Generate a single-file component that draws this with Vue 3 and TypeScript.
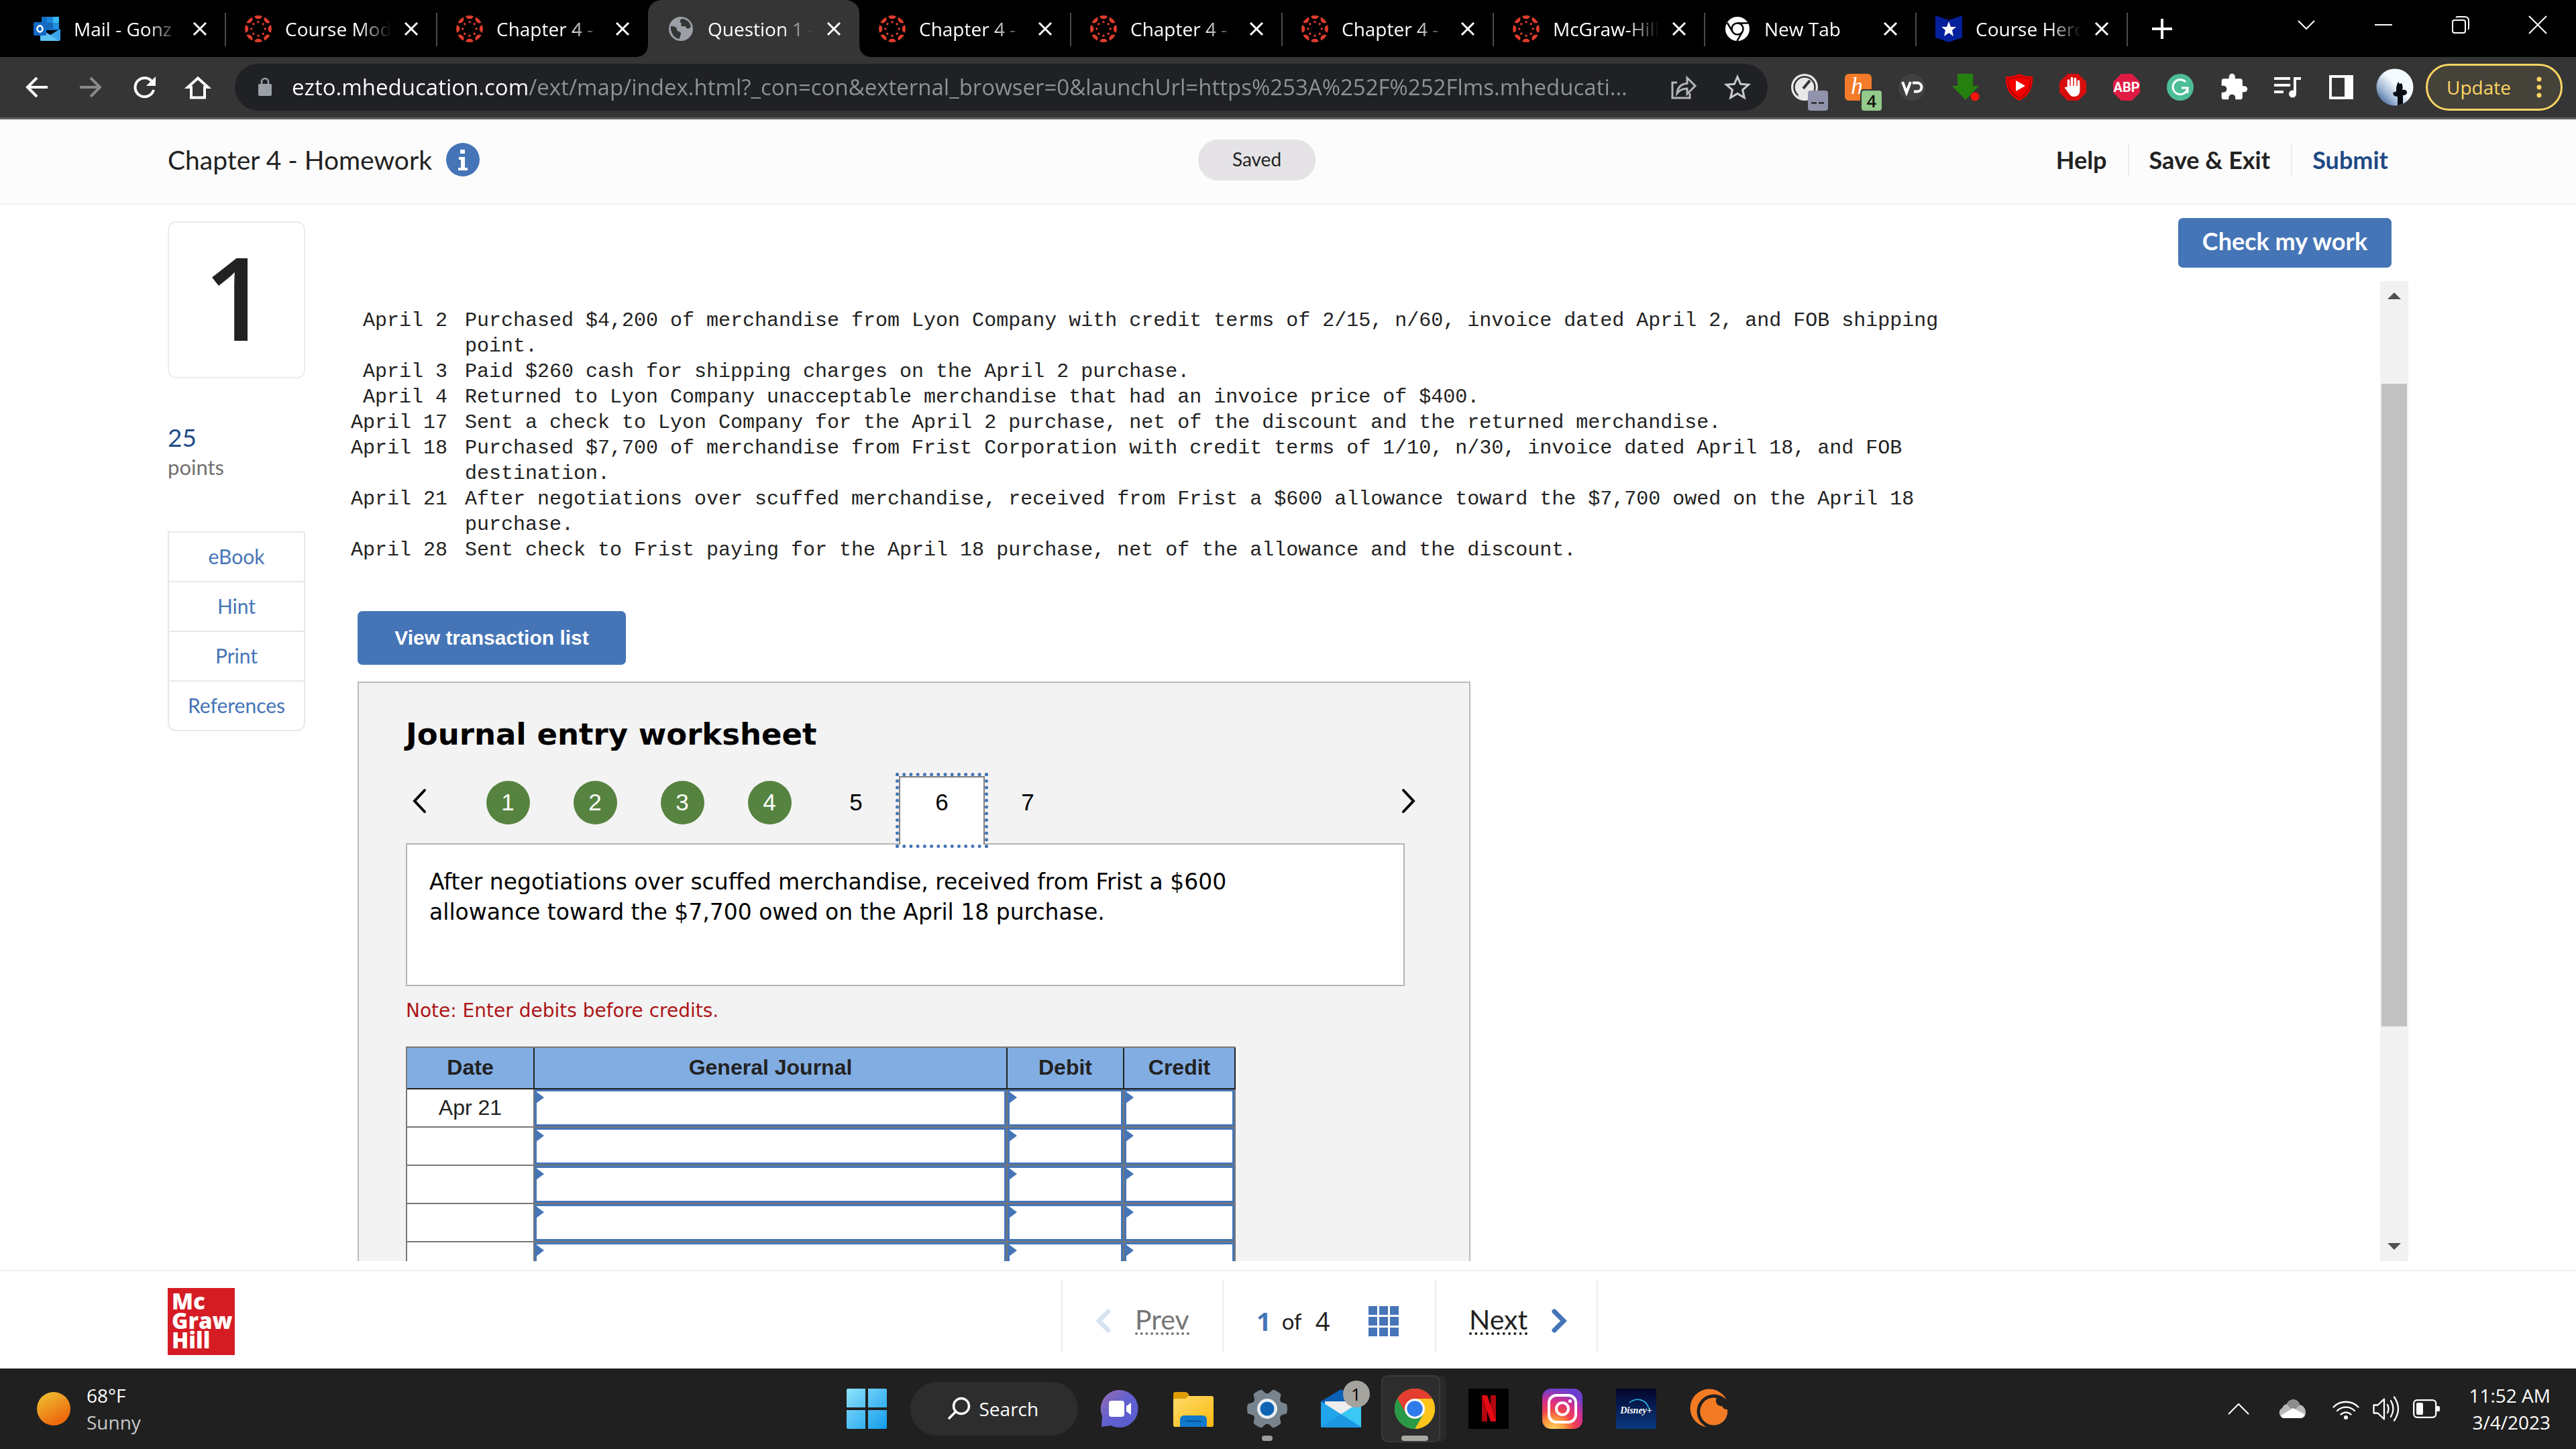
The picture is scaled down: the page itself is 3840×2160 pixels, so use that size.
<script setup lang="ts">
import { ref } from 'vue'

interface Tab {
  icon: string
  title: string
  active?: boolean
}

interface Transaction {
  date: string
  text: string
}

const spokes = [0, 45, 90, 135, 180, 225, 270, 315]

const canvasIcon =
  '<svg viewBox="-20 -20 40 40" width="40" height="40" fill="#e03c2d">' +
  spokes
    .map(
      (a) =>
        `<g transform="rotate(${a})"><path d="M-5.800-19.100A20 20 0 0 1 5.800-19.100A6 6 0 0 1-5.800-19.100z"/><circle cy="-10.200" r="1.700"/></g>`
    )
    .join('') +
  '</svg>'

const icons: Record<string, string> = {
  outlook:
    '<svg viewBox="0 0 40 40" width="40" height="40"><path d="M12 2h26v20H12z" fill="#0f6fc6"/><path d="M20 2h9v9h-9z" fill="#1a86d9"/><path d="M29 2h9v9h-9z" fill="#35b8f1"/><path d="M20 11h9v9h-9z" fill="#1468b8"/><path d="M29 11h9v9h-9z" fill="#1f8fe0"/><path d="M10 20l15 9 15-9v16a2 2 0 0 1-2 2H12a2 2 0 0 1-2-2z" fill="#3ba3ea"/><path d="M10 20l28 18H12a2 2 0 0 1-2-2z" fill="#5cc2f5"/><rect x="0" y="10" width="19" height="20" rx="2" fill="#1469c7"/><ellipse cx="9.500" cy="20" rx="4" ry="4.600" fill="none" stroke="#fff" stroke-width="2.600"/></svg>',
  canvas: canvasIcon,
  globe:
    '<svg viewBox="0 0 40 40" width="40" height="40"><circle cx="20" cy="20" r="18" fill="#9aa0a6"/><path d="M5 16c5 0 9 1 9 5s6 2 6 6-2 3-2 8c-8-1-14-9-13-19zM22 5c8 1 12 6 13 12-4 5-7 2-8 0s-4 0-6-1 1-4-1-5-2-5 2-6z" fill="#353535"/></svg>',
  chromeMono:
    '<svg viewBox="0 0 40 40" width="40" height="40"><circle cx="20" cy="20" r="18" fill="#fff"/><circle cx="20" cy="20" r="8.500" fill="none" stroke="#000" stroke-width="2.500"/><path d="M20 11.500h16M12.600 24.200L4.800 11M27.400 24.200L19.500 38" stroke="#000" stroke-width="2.500"/></svg>',
  courseHero:
    '<svg viewBox="0 0 40 40" width="40" height="40"><path d="M0 0l20 7 20-7v33l-20 7-20-7z" fill="#04209a"/><path d="M20 9l3 8h8l-6 5 2 9-7-5-7 5 2-9-6-5h8z" fill="#fff"/></svg>',
  back: '<svg viewBox="0 0 40 40" width="40" height="40" fill="none" stroke="#fff" stroke-width="4"><path d="M36 20H6M20 6L6 20l14 14"/></svg>',
  forward:
    '<svg viewBox="0 0 40 40" width="40" height="40" fill="none" stroke="#8a8a8a" stroke-width="4"><path d="M4 20h30M20 6l14 14-14 14"/></svg>',
  reload:
    '<svg viewBox="0 0 40 40" width="40" height="40"><path d="M32.500 13A14 14 0 1 0 34 24" fill="none" stroke="#fff" stroke-width="4"/><path d="M37 4v14H23z" fill="#fff"/></svg>',
  home: '<svg viewBox="0 0 40 40" width="40" height="40"><path d="M20 6.500L5 20h5v15.500h20V20h5z" fill="none" stroke="#fff" stroke-width="4"/></svg>',
  share:
    '<svg viewBox="0 0 40 40" width="40" height="40" fill="none" stroke="#b4b6b8" stroke-width="3"><path d="M10 13H3v23h26v-7"/><path d="M10 29c1-10 7-14 15-14.500V6l12 12-12 12v-8c-7 0-11 2-15 7z"/></svg>',
  star: '<svg viewBox="0 0 40 40" width="40" height="40"><path d="M20 4.500l4.700 10.800 11.800 1-8.900 7.800 2.700 11.500L20 29.500 9.700 35.600l2.700-11.500-8.900-7.800 11.800-1z" fill="none" stroke="#c8cacc" stroke-width="3"/></svg>',
  gauge:
    '<svg viewBox="0 0 60 60" width="60" height="60"><circle cx="30" cy="30" r="20" fill="#e8e8e6"/><circle cx="30" cy="30" r="15.500" fill="none" stroke="#333" stroke-width="2.500"/><path d="M38 20L28 32" stroke="#333" stroke-width="4"/><path d="M20 42a14 14 0 0 1 20 0l-4 6H24z" fill="#e8e8e6"/><rect x="35" y="35" width="30" height="30" rx="4" fill="#9193ad"/><path d="M40 53.500h8M51 53.500h8" stroke="#111" stroke-width="2"/></svg>',
  honey:
    '<svg viewBox="0 0 60 60" width="60" height="60"><rect x="10" y="10" width="40" height="40" rx="6" fill="#f47b29"/><text x="19" y="40" font-family="Liberation Serif, serif" font-style="italic" font-size="36" fill="#fff">h</text><rect x="33" y="33" width="34" height="34" rx="5" fill="#353535"/><rect x="35" y="35" width="30" height="30" rx="4" fill="#93ca8a"/><text x="50" y="60" text-anchor="middle" font-family="Open Sans, sans-serif" font-size="25" font-weight="600" fill="#111">4</text></svg>',
  vd: '<svg viewBox="0 0 60 60" width="60" height="60"><circle cx="30" cy="30" r="20" fill="#414141"/><path d="M16 22l6 16 6-16M31 23.500h7a6.500 6.500 0 0 1 0 13h-5" fill="none" stroke="#fff" stroke-width="4"/></svg>',
  download:
    '<svg viewBox="0 0 60 60" width="60" height="60"><path d="M18 10h23v18h9L30 49 10 28h8z" fill="#26800f"/><circle cx="44" cy="44" r="6.500" fill="#f5150c"/></svg>',
  shield:
    '<svg viewBox="0 0 60 60" width="60" height="60"><path d="M30 10c7 4 13 4 20 4 1 18-6 29-20 36C16 43 9 32 10 14c7 0 13 0 20-4z" fill="#f40000"/><path d="M30 14c6 3 11 3 17 3 0 15-5 23-17 29C18 40 13 32 13 17c6 0 11 0 17-3z" fill="none" stroke="#8b0000" stroke-width="1.200"/><path d="M25 20l14 8-14 8z" fill="#fff"/></svg>',
  hand: '<svg viewBox="0 0 60 60" width="60" height="60"><path d="M22 10h16l12 12v16L38 50H22L10 38V22z" fill="#d80d0d"/><path d="M23.500 33V20M28.500 30V16.500M33.500 30V17.500M38.500 33V21" stroke="#fff" stroke-width="3.600" stroke-linecap="round"/><path d="M21.700 28h18.600v8c0 5-4 8-8.500 8-4 0-6-2-8-5l-6-8c1-2 3-2 5 0z" fill="#fff"/></svg>',
  abp: '<svg viewBox="0 0 60 60" width="60" height="60"><path d="M22 10h16l12 12v16L38 50H22L10 38V22z" fill="#df1b43"/><text x="30" y="37" text-anchor="middle" font-family="Roboto, sans-serif" font-size="20" font-weight="700" fill="#fff">ABP</text></svg>',
  grammarly:
    '<svg viewBox="0 0 60 60" width="60" height="60"><circle cx="30" cy="30" r="20" fill="#4dbd98"/><path d="M38 22a11 11 0 1 0 3 9h-9M41 31v8" fill="none" stroke="#fff" stroke-width="3"/></svg>',
  puzzle:
    '<svg viewBox="0 0 24 24" width="44" height="44"><path d="M20.500 11H19V7a2 2 0 0 0-2-2h-4V3.500a2.500 2.500 0 0 0-5 0V5H4a2 2 0 0 0-2 2v3.800h1.500a2.700 2.700 0 0 1 0 5.400H2V20a2 2 0 0 0 2 2h3.800v-1.500a2.700 2.700 0 0 1 5.400 0V22H17a2 2 0 0 0 2-2v-4h1.500a2.500 2.500 0 0 0 0-5z" fill="#fff"/></svg>',
  playlist:
    '<svg viewBox="0 0 40 40" width="40" height="40"><path d="M0 7h24M0 17h24M0 27h14" stroke="#fff" stroke-width="4"/><path d="M31 31V7h9" fill="none" stroke="#fff" stroke-width="4"/><circle cx="27.500" cy="30" r="5.500" fill="#fff"/></svg>',
  sidePanel:
    '<svg viewBox="0 0 40 40" width="40" height="40"><path d="M2 2h36v36H2z" fill="#fff"/><path d="M6 6h19v28H6z" fill="#353535"/></svg>',
  avatar:
    '<svg viewBox="0 0 56 56" width="56" height="56"><defs><clipPath id="av"><circle cx="28" cy="28" r="27.500"/></clipPath><linearGradient id="avg" x1="1" y1="0" x2="0" y2="1"><stop offset=".45" stop-color="#f4fbff"/><stop offset=".7" stop-color="#9db4d4"/><stop offset="1" stop-color="#153a70"/></linearGradient></defs><g clip-path="url(#av)"><path d="M0 0h56v56H0z" fill="url(#avg)"/><path d="M32 56V42c-5 0-8-3-6-7 3 1 5-1 4-4 0-4 1-7 3-11l2 3 3-1c2 4 2 7 1 10 4-1 8 1 7 5-2 3-4 3-6 3v16z" fill="#0a0d14"/></g></svg>',
  windows:
    '<svg viewBox="0 0 60 60" width="60" height="60"><defs><linearGradient id="wg" x1="0" y1="0" x2="1" y2="1"><stop offset="0" stop-color="#8fe3fb"/><stop offset="1" stop-color="#119cec"/></linearGradient></defs><path d="M0 2a2 2 0 0 1 2-2h26v28H0zM32 0h26a2 2 0 0 1 2 2v26H32zM0 32h28v28H2a2 2 0 0 1-2-2zM32 32h28v26a2 2 0 0 1-2 2H32z" fill="url(#wg)"/></svg>',
  chat: '<svg viewBox="0 0 60 60" width="60" height="60"><defs><linearGradient id="cg" x1="0" y1="0" x2="1" y2="1"><stop offset="0" stop-color="#9b6db0"/><stop offset=".5" stop-color="#5f60cf"/><stop offset="1" stop-color="#5a5ad0"/></linearGradient></defs><path d="M30 2a28 28 0 1 1-13 53L3 57l1-16A28 28 0 0 1 30 2z" fill="url(#cg)"/><rect x="14" y="18" width="23" height="24" rx="4" fill="#fff"/><path d="M40 26l7-5v18l-7-5z" fill="#fff"/></svg>',
  folder:
    '<svg viewBox="0 0 60 60" width="60" height="60"><defs><linearGradient id="fg" x1="0" y1="0" x2="1" y2="1"><stop offset="0" stop-color="#ffdc6b"/><stop offset="1" stop-color="#fbb90f"/></linearGradient></defs><path d="M0 8a3 3 0 0 1 3-3h15c3 0 5 3 6 6l-6 8H0z" fill="#dd9b05"/><path d="M0 18c0-2 1-3 3-3h15l5-4h34a3 3 0 0 1 3 3v40a3 3 0 0 1-3 3H3a3 3 0 0 1-3-3z" fill="url(#fg)"/><path d="M10 57V46a6 6 0 0 1 6-6h28a6 6 0 0 1 6 6v11z" fill="#1079cb"/><path d="M18 48.500h24" stroke="#0b5394" stroke-width="2"/></svg>',
  settings:
    '<svg viewBox="-30 -30 60 60" width="60" height="60"><g fill="#77838d">' +
    [0, 60, 120, 180, 240, 300]
      .map((a) => `<path transform="rotate(${a + 30})" d="M-10-20L-7-29Q0-31 7-29L10-20z"/>`)
      .join('') +
    '<circle r="23"/></g><circle r="15" fill="#e9edf0"/><circle r="10.500" fill="#0e63b5"/></svg>',
  mail: '<svg viewBox="0 0 60 60" width="60" height="60"><path d="M0 19L30 1l30 18v20H0z" fill="#0b5fb5"/><path d="M6 19h48v22H6z" fill="#ededed"/><path d="M0 19l60 38a2 2 0 0 1-2 1H2a2 2 0 0 1-2-2z" fill="#22a4ea"/><path d="M60 19L30 38l30 20z" fill="#3cc8f4"/><path d="M30 38l30 19a2 2 0 0 1-2 1H2l-2-1z" fill="#1c97e4"/></svg>',
  chrome:
    '<svg viewBox="-30 -30 60 60" width="60" height="60"><circle r="30" fill="#fbbd09"/><path d="M0 0L-25.980-15A30 30 0 0 1 25.980-15H0z" fill="#e33e30"/><path d="M-25.980-15A30 30 0 0 0 0 30L13 7.500 0 0z" fill="#2a9a47"/><path d="M25.980-15A30 30 0 0 1 0 30L13 7.500 0-15z" fill="#fdc41c"/><path d="M-26-15L-13 7.500 0 0V-15z" fill="#e33e30"/><path d="M-25.980-15L-13 7.500 0 15 13 7.500 0 30A30 30 0 0 1-25.980-15z" fill="#2a9a47"/><circle r="15" fill="#fff"/><circle r="11.700" fill="#2f7bec"/></svg>',
  netflix:
    '<svg viewBox="0 0 60 60" width="60" height="60"><path d="M0 0h60v60H0z" fill="#000"/><path d="M20 10h8v39h-8zM33 10h8v39h-8z" fill="#b1060f"/><path d="M20 10h8l13 39h-8z" fill="#e50914"/></svg>',
  instagram:
    '<svg viewBox="0 0 60 60" width="60" height="60"><defs><radialGradient id="ig" cx=".28" cy="1.050" r="1.050"><stop offset="0" stop-color="#ffd96a"/><stop offset=".28" stop-color="#fa9a3c"/><stop offset=".5" stop-color="#f0434f"/><stop offset=".72" stop-color="#d92e8a"/><stop offset="1" stop-color="#6a3fd0"/></radialGradient></defs><rect width="60" height="60" rx="13" fill="url(#ig)"/><rect x="10" y="10" width="40" height="40" rx="11" fill="none" stroke="#fff" stroke-width="4"/><circle cx="30" cy="30" r="9" fill="none" stroke="#fff" stroke-width="4"/><circle cx="41.500" cy="18.500" r="2.600" fill="#fff"/></svg>',
  disney:
    '<svg viewBox="0 0 60 60" width="60" height="60"><defs><linearGradient id="dg" x1="0" y1="0" x2="0" y2="1"><stop offset="0" stop-color="#03052b"/><stop offset="1" stop-color="#0a3a80"/></linearGradient></defs><rect width="60" height="60" rx="2" fill="url(#dg)"/><path d="M20 21c10-8 25-6 29 9" fill="none" stroke="#2bb6e6" stroke-width="1.600"/><text x="30" y="37" text-anchor="middle" font-family="Liberation Serif, serif" font-style="italic" font-weight="700" font-size="14" fill="#fff">Disney+</text></svg>',
  crunchyroll:
    '<svg viewBox="0 0 60 60" width="60" height="60"><circle cx="29" cy="29" r="28.500" fill="#f47b23"/><circle cx="36" cy="34" r="25.500" fill="#202020"/><path d="M48 26a8 8 0 0 1-8-12A20.500 20.500 0 1 0 56 31a8 8 0 0 1-8-5z" fill="#f47b23"/></svg>',
  chevronUp:
    '<svg viewBox="0 0 32 18" width="32" height="18"><path d="M1 17L16 2l15 15" fill="none" stroke="#fff" stroke-width="2"/></svg>',
  cloud:
    '<svg viewBox="0 0 40 30" width="40" height="30"><path d="M8 29a8 8 0 0 1-3-15 9 9 0 0 1 7-6C15-1 29-1 31 9c6 1 9 6 9 12s-4 8-8 8z" fill="#b9b9b9"/><path d="M12 8c3-9 17-9 19 2l-10 8z" fill="#8c8c8c"/><path d="M3 25l18-11 17 9c0 4-3 6-6 6H8c-3 0-4-1-5-4z" fill="#fff"/></svg>',
  wifi: '<svg viewBox="0 0 40 32" width="40" height="32" fill="none" stroke="#fff" stroke-width="2.400" stroke-linecap="round"><path d="M1.500 13.500a26 26 0 0 1 37 0M7 19a18.500 18.500 0 0 1 26 0M12.500 24.500a10.500 10.500 0 0 1 15 0"/><circle cx="20" cy="29" r="1.800" fill="#fff"/></svg>',
  speaker:
    '<svg viewBox="0 0 40 40" width="40" height="40" fill="none" stroke="#fff" stroke-width="2.300" stroke-linejoin="round" stroke-linecap="round"><path d="M1.500 14.500h6l9.500-9v30l-9.500-9h-6zM22 14q3 6 0 12M27 8q7 12 0 24M32 2.500q12 17.500 0 35"/></svg>',
  battery:
    '<svg viewBox="0 0 40 28" width="40" height="28"><rect x="1.200" y="1.200" width="33" height="25.600" rx="5" fill="none" stroke="#fff" stroke-width="2.300"/><path d="M35 10h3a2 2 0 0 1 2 2v4a2 2 0 0 1-2 2h-3z" fill="#fff"/><rect x="5" y="5" width="10" height="18" rx="2" fill="#fff"/></svg>',
}

const tabs: Tab[] = [
  { icon: 'outlook', title: 'Mail - Gonz' },
  { icon: 'canvas', title: 'Course Mod' },
  { icon: 'canvas', title: 'Chapter 4 -' },
  { icon: 'globe', title: 'Question 1 -', active: true },
  { icon: 'canvas', title: 'Chapter 4 -' },
  { icon: 'canvas', title: 'Chapter 4 -' },
  { icon: 'canvas', title: 'Chapter 4 -' },
  { icon: 'canvas', title: 'McGraw-Hill' },
  { icon: 'chromeMono', title: 'New Tab' },
  { icon: 'courseHero', title: 'Course Hero' },
]

const navButtons = ['back', 'forward', 'reload', 'home']

const extensions = [
  'gauge', 'honey', 'vd', 'download', 'shield', 'hand',
  'abp', 'grammarly', 'puzzle', 'playlist', 'sidePanel', 'avatar',
]

const address = ref(
  'ezto.mheducation.com/ext/map/index.html?_con=con&external_browser=0&launchUrl=https%253A%252F%252Flms.mheducati...'
)

const resources = ['eBook', 'Hint', 'Print', 'References']

const transactions: Transaction[] = [
  { date: 'April 2', text: 'Purchased $4,200 of merchandise from Lyon Company with credit terms of 2/15, n/60, invoice dated April 2, and FOB shipping point.' },
  { date: 'April 3', text: 'Paid $260 cash for shipping charges on the April 2 purchase.' },
  { date: 'April 4', text: 'Returned to Lyon Company unacceptable merchandise that had an invoice price of $400.' },
  { date: 'April 17', text: 'Sent a check to Lyon Company for the April 2 purchase, net of the discount and the returned merchandise.' },
  { date: 'April 18', text: 'Purchased $7,700 of merchandise from Frist Corporation with credit terms of 1/10, n/30, invoice dated April 18, and FOB destination.' },
  { date: 'April 21', text: 'After negotiations over scuffed merchandise, received from Frist a $600 allowance toward the $7,700 owed on the April 18 purchase.' },
  { date: 'April 28', text: 'Sent check to Frist paying for the April 18 purchase, net of the allowance and the discount.' },
]

const doneSteps = [1, 2, 3, 4]
const openSteps = [5, 6, 7]
const currentStep = ref(6)

const journalColumns = ['General Journal', 'Debit', 'Credit']
const journalRows = ref(
  ['Apr 21', '', '', '', ''].map((date) => ({ date, cells: ['', '', ''] }))
)

const pinned = ['chat', 'folder', 'settings', 'mail', 'chrome', 'netflix', 'instagram', 'disney', 'crunchyroll']
</script>

<template>
  <div class="screen">
    <header class="tab-strip">
      <div v-for="(tab, i) in tabs" :key="i" class="tab" :class="{ active: tab.active, 'before-active': tabs[i + 1]?.active }">
        <span class="favicon" v-html="icons[tab.icon]"></span>
        <button class="tab-title">{{ tab.title }}</button>
        <button class="tab-close" aria-label="Close tab">
          <svg viewBox="0 0 20 20" width="20" height="20"><path d="M1 1l18 18M19 1L1 19" stroke="#fff" stroke-width="3" /></svg>
        </button>
      </div>
      <button class="new-tab" aria-label="New tab">
        <svg viewBox="0 0 30 30" width="30" height="30"><path d="M15 0v30M0 15h30" stroke="#fff" stroke-width="4" /></svg>
      </button>
      <div class="window-controls">
        <button aria-label="Search tabs">
          <svg viewBox="0 0 26 26" width="26" height="26"><path d="M1 7l12 12L25 7" fill="none" stroke="#fff" stroke-width="2" /></svg>
        </button>
        <button aria-label="Minimize">
          <svg viewBox="0 0 26 26" width="26" height="26"><path d="M0 13h26" stroke="#fff" stroke-width="2" /></svg>
        </button>
        <button aria-label="Restore">
          <svg viewBox="0 0 26 26" width="26" height="26"><rect x="1" y="6" width="19" height="19" rx="3" fill="none" stroke="#fff" stroke-width="2" /><path d="M6 2q1-1 3-1h10q6 0 6 6v10q0 2-1 3" fill="none" stroke="#fff" stroke-width="2" /></svg>
        </button>
        <button aria-label="Close window">
          <svg viewBox="0 0 26 26" width="26" height="26"><path d="M0 0l26 26M26 0L0 26" stroke="#fff" stroke-width="2" /></svg>
        </button>
      </div>
    </header>

    <nav class="toolbar">
      <button v-for="name in navButtons" :key="name" class="tool" :aria-label="name" v-html="icons[name]"></button>
      <div class="omnibox">
        <svg class="lock" viewBox="0 0 20 28" width="20" height="28"><rect y="9" width="20" height="18" rx="2" fill="#9aa0a6" /><path d="M5 10V6a5 5 0 0 1 10 0v4" fill="none" stroke="#9aa0a6" stroke-width="2.500" /></svg>
        <input v-model="address" class="address" type="text" aria-label="Address" />
        <button class="tool" aria-label="Share" v-html="icons.share"></button>
        <button class="tool" aria-label="Bookmark" v-html="icons.star"></button>
      </div>
      <button v-for="name in extensions" :key="name" class="tool" :aria-label="name" v-html="icons[name]"></button>
      <button class="update">
        Update
        <svg viewBox="0 0 8 32" width="8" height="32" fill="#fdd663"><circle cx="4" cy="4" r="3.500" /><circle cx="4" cy="16" r="3.500" /><circle cx="4" cy="28" r="3.500" /></svg>
      </button>
    </nav>

    <section class="page-header">
      <h1 class="assignment">
        Chapter 4 - Homework
        <svg viewBox="0 0 50 50" width="50" height="50"><circle cx="25" cy="25" r="25" fill="#4575b7" /><path d="M21 10h7v6h-7zM19 21h9v16h4v4H18v-4h4V25h-3z" fill="#fff" /></svg>
      </h1>
      <span class="saved">Saved</span>
      <nav class="page-links">
        <a href="#">Help</a>
        <a href="#">Save &amp; Exit</a>
        <a href="#" class="submit">Submit</a>
      </nav>
    </section>

    <main class="main">
      <aside class="question-info">
        <div class="question-number">1</div>
        <div class="points-value">25</div>
        <div class="points-label">points</div>
        <nav class="resources">
          <a v-for="item in resources" :key="item" href="#">{{ item }}</a>
        </nav>
      </aside>

      <div class="question">
        <div class="question-actions">
          <button class="primary check">Check my work</button>
        </div>
        <div class="viewport">
          <article class="document">
            <dl class="transactions">
              <template v-for="t in transactions" :key="t.date">
                <dt>{{ t.date }}</dt>
                <dd>{{ t.text }}</dd>
              </template>
            </dl>
            <button class="primary view-list">View transaction list</button>

            <section class="worksheet">
              <h2>Journal entry worksheet</h2>
              <div class="pager">
                <button class="arrow" aria-label="Previous entry">
                  <svg viewBox="0 0 24 40" width="24" height="40"><path d="M20 4L5 20l15 16" fill="none" stroke="#000" stroke-width="4" stroke-linecap="round" /></svg>
                </button>
                <button v-for="n in doneSteps" :key="n" class="step done"><span>{{ n }}</span></button>
                <button v-for="n in openSteps" :key="n" class="step" :class="{ current: n === currentStep }" @click="currentStep = n"><span>{{ n }}</span></button>
                <button class="arrow next" aria-label="Next entry">
                  <svg viewBox="0 0 24 40" width="24" height="40"><path d="M4 4l15 16L4 36" fill="none" stroke="#000" stroke-width="4" stroke-linecap="round" /></svg>
                </button>
              </div>
              <div class="entry-text">
                <p>After negotiations over scuffed merchandise, received from Frist a $600 allowance toward the $7,700 owed on the April 18 purchase.</p>
              </div>
              <p class="note">Note: Enter debits before credits.</p>
              <table class="journal">
                <colgroup>
                  <col class="col-date" />
                  <col class="col-journal" />
                  <col class="col-debit" />
                  <col class="col-credit" />
                </colgroup>
                <thead>
                  <tr>
                    <th>Date</th>
                    <th v-for="c in journalColumns" :key="c">{{ c }}</th>
                  </tr>
                </thead>
                <tbody>
                  <tr v-for="(row, r) in journalRows" :key="r">
                    <td>{{ row.date }}</td>
                    <td v-for="(c, k) in journalColumns" :key="c" class="entry">
                      <input v-model="row.cells[k]" type="text" :aria-label="`${c}, row ${r + 1}`" />
                    </td>
                  </tr>
                </tbody>
              </table>
            </section>
          </article>
          <div class="scrollbar">
            <svg viewBox="0 0 20 10" width="20" height="10"><path d="M0 10L10 0l10 10z" fill="#505050" /></svg>
            <div class="track"><div class="thumb"></div></div>
            <svg viewBox="0 0 20 10" width="20" height="10"><path d="M0 0l10 10L20 0z" fill="#505050" /></svg>
          </div>
        </div>
      </div>
    </main>

    <footer class="page-footer">
      <div class="logo"><span>Mc</span><span>Graw</span><span>Hill</span></div>
      <nav class="question-nav">
        <div class="nav-cell prev">
          <svg viewBox="0 0 24 36" width="24" height="36"><path d="M20 4L6 18l14 14" fill="none" stroke="#d8e3f2" stroke-width="7" stroke-linecap="round" /></svg>
          <a href="#">Prev</a>
        </div>
        <div class="nav-cell position">
          <strong>1</strong><span class="of">of</span><span>4</span>
          <button class="grid-button" aria-label="All questions">
            <svg viewBox="0 0 45 45" width="45" height="45" fill="#4575b7">
              <template v-for="y in 3" :key="y">
                <rect v-for="x in 3" :key="x" :x="(x - 1) * 16" :y="(y - 1) * 16" width="13" height="13" />
              </template>
            </svg>
          </button>
        </div>
        <div class="nav-cell next">
          <a href="#">Next</a>
          <svg viewBox="0 0 24 36" width="24" height="36"><path d="M4 4l14 14L4 32" fill="none" stroke="#4575b7" stroke-width="7" stroke-linecap="round" /></svg>
        </div>
      </nav>
    </footer>

    <footer class="taskbar">
      <div class="weather">
        <span class="sun"></span>
        <div><div>68°F</div><div class="dim">Sunny</div></div>
      </div>
      <div class="apps">
        <button class="app" aria-label="Start" v-html="icons.windows"></button>
        <button class="search">
          <svg viewBox="0 0 36 36" width="36" height="36"><circle cx="21" cy="14" r="11.500" fill="none" stroke="#fff" stroke-width="3.500" /><path d="M13 22L3 32" stroke="#fff" stroke-width="3.500" stroke-linecap="round" /></svg>
          Search
        </button>
        <button v-for="name in pinned" :key="name" class="app" :class="name" :aria-label="name">
          <span class="glyph" v-html="icons[name]"></span>
          <span v-if="name === 'mail'" class="badge">1</span>
        </button>
      </div>
      <div class="tray">
        <span class="tray-icon up" v-html="icons.chevronUp"></span>
        <span class="tray-icon cloud" v-html="icons.cloud"></span>
        <span class="tray-icon" v-html="icons.wifi"></span>
        <span class="tray-icon" v-html="icons.speaker"></span>
        <span class="tray-icon" v-html="icons.battery"></span>
        <div class="clock"><div>11:52 AM</div><div>3/4/2023</div></div>
      </div>
    </footer>
  </div>
</template>

<style>
body {
  margin: 0;
  background: #fff;
}
</style>

<style scoped>
.screen {
  --blue: #4575b7;
  --navy: #1f4a86;
  --ink: #222;
  --ui: 'Open Sans', 'Noto Sans', sans-serif;
  --brand: Lato, 'Open Sans', sans-serif;
  --plain: 'Liberation Sans', Arial, sans-serif;
  --wide: 'DejaVu Sans', Verdana, sans-serif;
  display: flex;
  flex-direction: column;
  height: 100vh;
  overflow: hidden;
  background: #fff;
  color: var(--ink);
  font-family: var(--brand);
}

.screen :deep(svg) {
  display: block;
  flex: none;
  overflow: visible;
}

button,
input {
  margin: 0;
  padding: 0;
  border: 0;
  background: none;
  color: inherit;
  font: inherit;
}

a {
  color: inherit;
  text-decoration: none;
}

/* Tab strip */
.tab-strip {
  display: flex;
  flex: none;
  height: 85px;
  padding-left: 21px;
  background: #000;
  color: #fff;
  font: 28px/40px var(--ui);
}

.tab {
  position: relative;
  display: flex;
  flex: 0 1 315px;
  align-items: center;
  box-sizing: border-box;
  padding-left: 29px;
}

.tab::after {
  content: '';
  position: absolute;
  top: 19px;
  right: -1px;
  width: 2px;
  height: 50px;
  background: #4a4a4a;
}

.tab.active::after {
  top: auto;
  right: -16px;
  bottom: 0;
  width: 16px;
  height: 16px;
  background: radial-gradient(circle at 100% 0, transparent 15px, #353535 16px);
}

.tab.before-active::after {
  top: auto;
  right: 0;
  bottom: 0;
  width: 16px;
  height: 16px;
  background: radial-gradient(circle at 0 0, transparent 15px, #353535 16px);
}

.tab.active {
  border-radius: 20px 20px 0 0;
  background: #353535;
}

.tab-title {
  width: 160px;
  margin: 0 18px 0 20px;
  text-align: left;
  white-space: nowrap;
  mask-image: linear-gradient(to right, #000 110px, transparent 158px);
}

.new-tab {
  margin-left: 37px;
}

.window-controls {
  display: flex;
  margin-left: auto;
}

.window-controls button {
  display: grid;
  width: 115px;
  height: 73px;
  place-items: center;
}

/* Toolbar */
.toolbar {
  display: flex;
  flex: none;
  align-items: center;
  height: 90px;
  padding: 0 20px 0 15px;
  border-bottom: 3px solid #5f5f5f;
  background: #353535;
}

.tool {
  display: grid;
  flex: none;
  width: 80px;
  height: 70px;
  place-items: center;
}

.omnibox {
  display: flex;
  flex: 1;
  align-items: center;
  height: 70px;
  margin: 0 15px;
  padding: 0 5px 0 35px;
  border-radius: 35px;
  background: #202124;
}

.address {
  flex: 1;
  min-width: 0;
  height: 60px;
  margin-left: 30px;
  background: linear-gradient(to right, #fff 352px, #8f9397 352px);
  background-clip: text;
  color: transparent;
  font: 33px/60px var(--ui);
}

.update {
  display: flex;
  flex: none;
  align-items: center;
  justify-content: space-between;
  box-sizing: border-box;
  width: 204px;
  height: 70px;
  margin-left: 6px;
  padding: 0 28px;
  border: 3px solid #fdd663;
  border-radius: 35px;
  background: #45423a;
  color: #fdd663;
  font: 28px/40px var(--ui);
}

/* Assignment header */
.page-header {
  display: flex;
  flex: none;
  align-items: center;
  box-sizing: border-box;
  height: 127px;
  padding: 0 280px 5px 250px;
  border-bottom: 2px solid #f0f0f0;
  background: #fcfcfc;
}

.assignment {
  display: flex;
  flex: 0 0 40vw;
  align-items: center;
  gap: 21px;
  margin: 0;
  font-weight: 400;
  font-size: 39px;
  line-height: 50px;
}

.saved {
  box-sizing: border-box;
  width: 175px;
  height: 61px;
  border-radius: 30px;
  background: #e5e3e6;
  font-size: 28px;
  line-height: 58px;
  text-align: center;
}

.page-links {
  display: flex;
  margin-left: auto;
  font-weight: 700;
  font-size: 36px;
  line-height: 50px;
}

.page-links a + a {
  margin-left: 31px;
  padding-left: 30px;
  border-left: 2px solid #ececec;
}

.submit {
  color: var(--navy);
}

/* Question */
.main {
  display: flex;
  flex: 1;
  gap: 62px;
  min-height: 0;
  padding: 20px 250px 13px;
}

.question-info {
  flex: none;
  width: 205px;
  padding-top: 5px;
}

.question-number {
  box-sizing: border-box;
  height: 234px;
  border: 2px solid #ececec;
  border-radius: 12px;
  font: 600 172px/218px var(--ui);
  text-align: center;
}

.points-value {
  margin-top: 66px;
  color: var(--navy);
  font-size: 37px;
  line-height: 44px;
}

.points-label {
  color: #707070;
  font-size: 31px;
  line-height: 44px;
}

.resources {
  display: flex;
  flex-direction: column;
  margin-top: 74px;
  border: 2px solid #e8e8e8;
  border-radius: 0 0 12px 12px;
  color: var(--blue);
  font-size: 30px;
  line-height: 70px;
  text-align: center;
}

.resources a {
  padding-bottom: 2px;
}

.resources a + a {
  border-top: 2px solid #e8e8e8;
}

.question {
  display: flex;
  flex: 1;
  flex-direction: column;
  min-width: 0;
}

.question-actions {
  display: flex;
  justify-content: flex-end;
  padding: 0 25px 20px 0;
}

.primary {
  border-radius: 7px;
  background: var(--blue);
  color: #fff;
  font-weight: 700;
}

.check {
  width: 318px;
  height: 74px;
  padding-bottom: 6px;
  font-size: 36px;
}

.viewport {
  display: flex;
  flex: 1;
  min-height: 0;
}

.document {
  flex: 1;
  min-width: 0;
  overflow: hidden;
  padding-top: 40px;
}

.transactions {
  display: grid;
  grid-template-columns: 150px minmax(0, 2220px);
  column-gap: 26px;
  margin: 0;
  font: 30px/38px 'Liberation Mono', 'Courier New', monospace;
}

dt {
  text-align: right;
}

dd {
  margin: 0;
}

.view-list {
  display: block;
  width: 400px;
  height: 80px;
  margin: 72px 0 25px 16px;
  font: 700 30px/40px var(--plain);
}

.worksheet {
  box-sizing: border-box;
  max-width: 1659px;
  height: 1000px;
  margin-left: 16px;
  padding: 50px 70px;
  border: 2px solid #bcbcbc;
  background: #f3f3f3;
  color: #000;
  font-family: var(--wide);
}

h2 {
  margin: 0;
  font-weight: 700;
  font-size: 45px;
  line-height: 54px;
}

.pager {
  display: flex;
  height: 100px;
  margin-top: 35px;
  font: 35px/63px var(--plain);
}

.arrow {
  display: grid;
  width: 40px;
  height: 73px;
  margin-right: 47px;
  place-items: center;
}

.arrow.next {
  margin: 0 0 0 auto;
}

.step {
  display: flex;
  align-items: flex-start;
  justify-content: center;
  box-sizing: border-box;
  width: 128px;
  height: 102px;
  padding-top: 7px;
}

.step.done {
  width: 130px;
  color: #fff;
}

.step span {
  width: 65px;
  padding-bottom: 2px;
  border-radius: 50%;
}

.step.done span {
  background: #56833f;
}

.step.current {
  position: relative;
  padding-top: 5px;
  border: solid #808080;
  border-width: 2px 2px 0;
  outline: 5px dotted var(--blue);
  background: #fff;
}

.entry-text {
  box-sizing: border-box;
  height: 213px;
  margin-right: 26px;
  padding: 33px;
  border: 2px solid #b5b5b5;
  background: #fff;
  font-size: 33px;
  line-height: 45px;
}

.entry-text p {
  max-width: 1280px;
  margin: 0;
}

.note {
  margin: 19px 0 35px;
  color: #ad1518;
  font-size: 28px;
  line-height: 36px;
}

.journal {
  width: 1237px;
  border: solid #777;
  border-width: 2px 0 0 2px;
  border-spacing: 0;
  table-layout: fixed;
  color: var(--ink);
  font: 32px/40px var(--plain);
  text-align: center;
}

.col-date {
  width: 190px;
}

.col-journal {
  width: 705px;
}

.col-debit {
  width: 174px;
}

.col-credit {
  width: 166px;
}

th {
  box-sizing: border-box;
  height: 62px;
  padding: 0 0 2px;
  border: solid #222;
  border-width: 0 2px 2px 0;
  background: #82ade2;
}

td {
  box-sizing: border-box;
  height: 57px;
  padding: 0 0 2px;
  border: solid #777;
  border-width: 0 2px 2px 0;
  background: #fff;
}

.entry {
  position: relative;
  padding: 0;
}

.entry input {
  display: block;
  box-sizing: border-box;
  width: 100%;
  height: 55px;
  padding: 0 14px;
  border: 3px solid var(--blue);
}

.entry::before {
  content: '';
  position: absolute;
  top: 3px;
  left: 2px;
  border: solid transparent;
  border-width: 9px 0 9px 12px;
  border-left-color: var(--blue);
}

.scrollbar {
  display: flex;
  flex: none;
  flex-direction: column;
  align-items: center;
  box-sizing: border-box;
  width: 42px;
  padding: 17px 0;
  background: #f1f1f1;
}

.track {
  box-sizing: border-box;
  flex: 1;
  width: 38px;
  padding: 126px 0 323px;
}

.thumb {
  height: 100%;
  background: #c1c1c1;
}

/* Page footer */
.page-footer {
  display: flex;
  flex: none;
  box-sizing: border-box;
  height: 147px;
  padding-left: 250px;
  border-top: 2px solid #f0f0f0;
}

.logo {
  display: flex;
  flex-direction: column;
  box-sizing: border-box;
  width: 100px;
  height: 100px;
  margin-top: 25px;
  padding: 5px 6px 0;
  background: #d51c24;
  color: #fff;
  font: 800 33px/29px 'Open Sans', 'Noto Sans', sans-serif;
}

.question-nav {
  display: flex;
  height: 108px;
  margin: 13px 0 0 calc(50vw - 688px);
  border-left: 2px solid #ececec;
  font-size: 41px;
}

.nav-cell {
  display: flex;
  align-items: center;
  box-sizing: border-box;
  padding-top: 14px;
  border-right: 2px solid #ececec;
}

.nav-cell a {
  border-bottom: 4px dotted;
  line-height: 38px;
}

.prev {
  gap: 36px;
  width: 240px;
  padding-left: 48px;
  color: #757575;
}

.position {
  width: 317px;
  padding-left: 49px;
  font: 38px/40px var(--ui);
}

.position strong {
  color: var(--blue);
}

.of {
  margin: 0 20px 0 16px;
  font-family: var(--brand);
  font-size: 33px;
}

.grid-button {
  margin: 0 0 0 auto;
  padding-right: 54px;
}

.nav-cell.next {
  gap: 36px;
  width: 241px;
  padding-left: 49px;
}

/* Taskbar */
.taskbar {
  display: grid;
  flex: none;
  grid-template-columns: 1fr auto 1fr;
  align-items: center;
  height: 120px;
  background: #202020;
  color: #fff;
  font: 28px/40px var(--ui);
}

.weather {
  display: flex;
  align-items: center;
  gap: 24px;
  padding-left: 55px;
}

.sun {
  width: 50px;
  height: 50px;
  border-radius: 50%;
  background: linear-gradient(150deg, #eebb30 10%, #ee6a0e 80%);
}

.dim {
  color: #c8c8c8;
}

.apps {
  display: flex;
  align-items: center;
}

.app {
  position: relative;
  display: grid;
  width: 110px;
  height: 100px;
  place-items: center;
}

.glyph {
  position: relative;
}

.search {
  display: flex;
  align-items: center;
  gap: 12px;
  box-sizing: border-box;
  width: 250px;
  height: 80px;
  margin: 0 7px 0 10px;
  padding-left: 55px;
  border-radius: 40px;
  background: #2d2d2d;
}

.settings::after,
.chrome::after {
  content: '';
  position: absolute;
  bottom: 2px;
  left: 47px;
  width: 16px;
  height: 8px;
  border-radius: 4px;
  background: #9d9d9d;
}

.chrome::after {
  left: 35px;
  width: 40px;
  background: #aaa9a4;
}

.chrome::before {
  content: '';
  position: absolute;
  top: 0;
  left: 5px;
  box-sizing: border-box;
  width: 88px;
  height: 100px;
  border: 2px solid #3a3a3a;
  border-radius: 10px;
  background: #2d2d2d;
  box-shadow: 10px 0 0 -1px #2a2a2a;
}

.badge {
  position: absolute;
  top: 8px;
  left: 58px;
  width: 40px;
  height: 40px;
  border-radius: 50%;
  background: #a5a39e;
  color: #000;
  font-size: 26px;
}

.tray {
  display: flex;
  align-items: center;
  justify-content: flex-end;
  padding-right: 38px;
}

.tray-icon {
  display: grid;
  width: 60px;
  place-items: center;
}

.tray-icon.up,
.tray-icon.cloud {
  margin-right: 20px;
}

.clock {
  width: 155px;
  text-align: right;
}
</style>
